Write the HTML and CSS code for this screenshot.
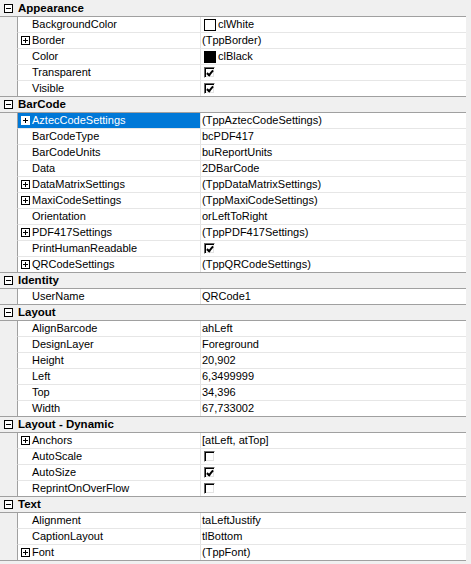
FILE: index.html
```html
<!DOCTYPE html>
<html lang="en">
<head>
  <meta charset="UTF-8">
  <title>Object Inspector</title>
  <link rel="stylesheet" href="styles.css">
</head>
<body>
  <div class="grid">

    <div class="cat"><span class="tog minus"></span>Appearance</div>
    <div class="row"><div class="name"><span class="tog"></span>BackgroundColor</div><div class="val"><span class="swatch"></span>clWhite</div></div>
    <div class="row"><div class="name"><span class="tog plus"></span>Border</div><div class="val">(TppBorder)</div></div>
    <div class="row"><div class="name"><span class="tog"></span>Color</div><div class="val"><span class="swatch black"></span>clBlack</div></div>
    <div class="row"><div class="name"><span class="tog"></span>Transparent</div><div class="val"><span class="chk on"></span></div></div>
    <div class="row last"><div class="name"><span class="tog"></span>Visible</div><div class="val"><span class="chk on"></span></div></div>

    <div class="cat"><span class="tog minus"></span>BarCode</div>
    <div class="row selected"><div class="name"><span class="tog plus"></span>AztecCodeSettings</div><div class="val">(TppAztecCodeSettings)</div></div>
    <div class="row"><div class="name"><span class="tog"></span>BarCodeType</div><div class="val">bcPDF417</div></div>
    <div class="row"><div class="name"><span class="tog"></span>BarCodeUnits</div><div class="val">buReportUnits</div></div>
    <div class="row"><div class="name"><span class="tog"></span>Data</div><div class="val">2DBarCode</div></div>
    <div class="row"><div class="name"><span class="tog plus"></span>DataMatrixSettings</div><div class="val">(TppDataMatrixSettings)</div></div>
    <div class="row"><div class="name"><span class="tog plus"></span>MaxiCodeSettings</div><div class="val">(TppMaxiCodeSettings)</div></div>
    <div class="row"><div class="name"><span class="tog"></span>Orientation</div><div class="val">orLeftToRight</div></div>
    <div class="row"><div class="name"><span class="tog plus"></span>PDF417Settings</div><div class="val">(TppPDF417Settings)</div></div>
    <div class="row"><div class="name"><span class="tog"></span>PrintHumanReadable</div><div class="val"><span class="chk on"></span></div></div>
    <div class="row last"><div class="name"><span class="tog plus"></span>QRCodeSettings</div><div class="val">(TppQRCodeSettings)</div></div>

    <div class="cat"><span class="tog minus"></span>Identity</div>
    <div class="row last"><div class="name"><span class="tog"></span>UserName</div><div class="val">QRCode1</div></div>

    <div class="cat"><span class="tog minus"></span>Layout</div>
    <div class="row"><div class="name"><span class="tog"></span>AlignBarcode</div><div class="val">ahLeft</div></div>
    <div class="row"><div class="name"><span class="tog"></span>DesignLayer</div><div class="val">Foreground</div></div>
    <div class="row"><div class="name"><span class="tog"></span>Height</div><div class="val">20,902</div></div>
    <div class="row"><div class="name"><span class="tog"></span>Left</div><div class="val">6,3499999</div></div>
    <div class="row"><div class="name"><span class="tog"></span>Top</div><div class="val">34,396</div></div>
    <div class="row last"><div class="name"><span class="tog"></span>Width</div><div class="val">67,733002</div></div>

    <div class="cat"><span class="tog minus"></span>Layout - Dynamic</div>
    <div class="row"><div class="name"><span class="tog plus"></span>Anchors</div><div class="val">[atLeft, atTop]</div></div>
    <div class="row"><div class="name"><span class="tog"></span>AutoScale</div><div class="val"><span class="chk"></span></div></div>
    <div class="row"><div class="name"><span class="tog"></span>AutoSize</div><div class="val"><span class="chk on"></span></div></div>
    <div class="row last"><div class="name"><span class="tog"></span>ReprintOnOverFlow</div><div class="val"><span class="chk"></span></div></div>

    <div class="cat"><span class="tog minus"></span>Text</div>
    <div class="row"><div class="name"><span class="tog"></span>Alignment</div><div class="val">taLeftJustify</div></div>
    <div class="row"><div class="name"><span class="tog"></span>CaptionLayout</div><div class="val">tlBottom</div></div>
    <div class="row last"><div class="name"><span class="tog plus"></span>Font</div><div class="val">(TppFont)</div></div>

  </div>
</body>
</html>
```

FILE: styles.css
```css
body {
  margin: 0;
  background: #f0f0f0;
  font-family: "Liberation Sans", Arial, sans-serif;
  font-size: 11px;
  color: #000;
}

.grid {
  width: 466px;
  padding-top: 1px;
  display: flex;
  flex-direction: column;
}

/* category header */
.cat {
  height: 16px;
  box-sizing: border-box;
  display: flex;
  align-items: center;
  padding-left: 4px;
  background: #f0f0f0;
  border-bottom: 1px solid #a0a0a0;
  font-weight: bold;
  font-size: 11.5px;
  line-height: 15px;
}
.cat .tog {
  margin-right: 5px;
}

/* property row */
.row {
  height: 16px;
  display: flex;
  padding-left: 17px;
  background: #f0f0f0;
}
.row .name,
.row .val {
  box-sizing: border-box;
  height: 16px;
  background: #fff;
  border-bottom: 1px solid #e6e6e6;
  display: flex;
  align-items: center;
  line-height: 15px;
  white-space: nowrap;
}
.row .name {
  width: 184px;
  border-left: 1px solid #a0a0a0;
  border-right: 1px solid #e3e3e3;
  padding-left: 3px;
}
.row .val {
  width: 265px;
  padding-left: 1px;
}
.row.last {
  border-bottom: 1px solid #a0a0a0;
  height: 15px;
}
.row.last .name,
.row.last .val {
  height: 15px;
  border-bottom: none;
}

.row.selected .name {
  background: #0078d7;
  color: #fff;
}

/* expand / collapse boxes */
.tog {
  width: 9px;
  height: 9px;
  box-sizing: border-box;
  flex: none;
  margin-right: 2px;
}
.tog.plus,
.tog.minus {
  border: 1px solid #000;
  background: #fff linear-gradient(#000, #000) center / 5px 1px no-repeat;
}
.tog.plus {
  background: linear-gradient(#000, #000) center / 5px 1px no-repeat,
              linear-gradient(#000, #000) center / 1px 5px no-repeat,
              #fff;
}
.row.selected .tog.plus {
  border-color: #fff;
}

/* colour swatch */
.swatch {
  width: 12px;
  height: 12px;
  box-sizing: border-box;
  border: 1px solid #000;
  background: #fff;
  margin: 0 2px 0 2px;
}
.swatch.black {
  background: #000;
}

/* classic 3d checkbox */
.chk {
  position: relative;
  width: 11px;
  height: 11px;
  box-sizing: border-box;
  margin-left: 2px;
  background: #fff;
  border-top: 1px solid #696969;
  border-left: 1px solid #696969;
  border-right: 1px solid #fff;
  border-bottom: 1px solid #fff;
  box-shadow: inset 1px 1px 0 #000, inset -1px -1px 0 #e3e3e3;
}
.chk.on::after {
  content: "";
  position: absolute;
  left: 3px;
  top: 1px;
  width: 2px;
  height: 5px;
  border-right: 2px solid #000;
  border-bottom: 2px solid #000;
  transform: rotate(40deg);
}
```
